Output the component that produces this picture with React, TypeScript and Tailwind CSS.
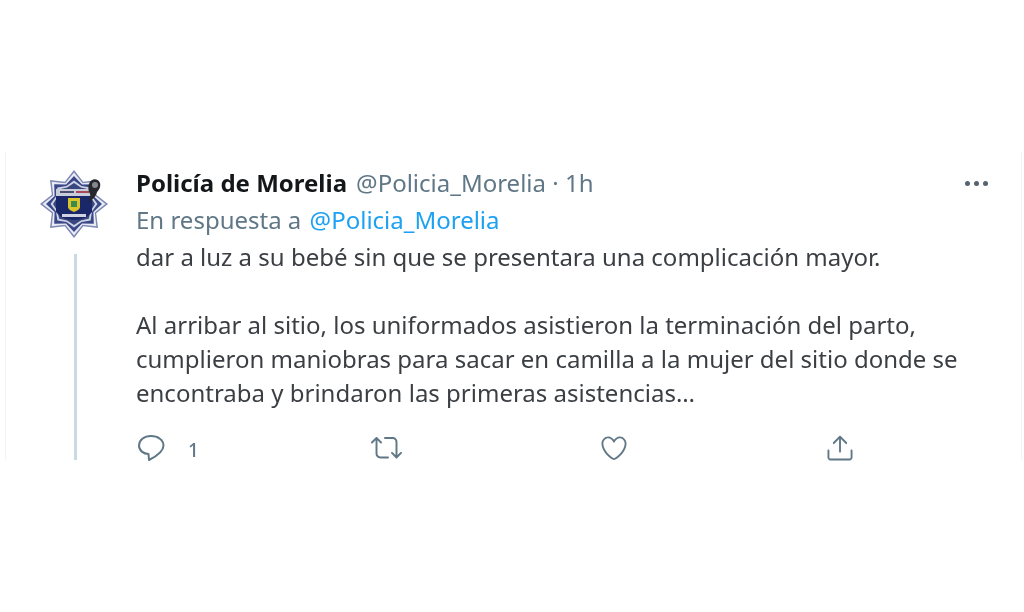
const font = "font-['Noto_Sans',sans-serif]";

function star(r1: number, r2: number) {
  const pts: string[] = [];
  for (let i = 0; i < 16; i++) {
    const a = (i * Math.PI) / 8 - Math.PI / 2;
    const r = i % 2 === 0 ? r1 : r2;
    pts.push(`${(34 + r * Math.cos(a)).toFixed(1)},${(34 + r * Math.sin(a)).toFixed(1)}`);
  }
  return pts.join(" ");
}

function Badge() {
  return (
    <svg width="70" height="68" viewBox="0 0 70 68" className="blur-[0.6px]">
      <polygon points={star(34, 24)} fill="#7f89b4" />
      <polygon points={star(31.500, 22.500)} fill="#e9ebf4" />
      <polygon points={star(28, 21)} fill="#3a4888" />
      <polygon points={star(23.500, 19.500)} fill="#cfd3e4" />
      <polygon points={star(21, 18)} fill="#39477f" />
      <path d="M16 21h36v21c-4 5-10 8-18 8s-14-3-18-8z" fill="#1a2768" />
      <rect x="16" y="19" width="36" height="7" fill="#c9ccda" />
      <rect x="20" y="21" width="14" height="2" fill="#4a4f6e" />
      <rect x="36" y="21" width="13" height="2" fill="#a8485a" />
      <path d="M28 28h12v9c0 2-3 4-6 5-3-1-6-3-6-5z" fill="#d9c528" />
      <rect x="31" y="31" width="6" height="6" fill="#3c8a4c" />
      <rect x="22" y="44" width="24" height="3" fill="#cfd2e2" />
      <path d="M49 14c2-6 9-6 11-1 1 4-1 7-3 9-1 4-4 8-9 10 1-3 3-6 2-8-2-3-2-7-1-10z" fill="#26272d" />
      <circle cx="55" cy="15" r="3" fill="#85878e" />
    </svg>
  );
}

const iconColor = "#5f7786";

function Reply() {
  return (
    <svg width="30" height="30" viewBox="0 0 30 30" fill="none" stroke={iconColor} strokeWidth="2" strokeLinejoin="round">
      <path d="M15 3C8 3 3 7 3 12.500C3 17.500 7.500 21 12.500 21L13 27C20 23.500 27.500 18.500 27.500 12.500C27.500 7 22 3 15 3z" />
    </svg>
  );
}

function Retweet() {
  return (
    <svg width="31" height="31" viewBox="0 0 24 24" fill={iconColor}>
      <path d="M23.77 15.67c-.292-.293-.767-.293-1.06 0l-2.22 2.22V7.65c0-2.068-1.683-3.75-3.75-3.75h-5.85c-.414 0-.75.336-.75.75s.336.75.75.75h5.85c1.24 0 2.25 1.01 2.25 2.25v10.24l-2.22-2.22c-.293-.293-.768-.293-1.06 0s-.294.768 0 1.06l3.5 3.5c.145.147.337.22.53.22s.383-.072.53-.22l3.5-3.5c.294-.292.294-.767 0-1.06zm-10.66 3.28H7.26c-1.24 0-2.25-1.01-2.25-2.25V6.46l2.22 2.22c.148.147.34.22.532.22s.384-.073.53-.22c.293-.293.293-.768 0-1.06l-3.5-3.5c-.293-.294-.768-.294-1.06 0l-3.5 3.5c-.294.292-.294.767 0 1.06s.767.293 1.06 0l2.22-2.22V16.7c0 2.068 1.683 3.750 3.75 3.750h5.85c.414 0 .75-.336.75-.75s-.337-.75-.75-.75z" />
    </svg>
  );
}

function Heart() {
  return (
    <svg width="30" height="30" viewBox="0 0 24 24" fill={iconColor}>
      <path d="M12 21.638h-.014C9.403 21.59 1.95 14.856 1.95 8.478c0-3.064 2.525-5.754 5.403-5.754 2.29 0 3.83 1.58 4.646 2.73.814-1.148 2.354-2.73 4.645-2.73 2.88 0 5.404 2.69 5.404 5.755 0 6.376-7.454 13.11-10.037 13.157H12zM7.354 4.225c-2.08 0-3.903 1.988-3.903 4.255 0 5.74 7.034 11.596 8.55 11.658 1.518-.062 8.55-5.917 8.55-11.658 0-2.267-1.823-4.255-3.903-4.255-2.528 0-3.94 2.936-3.952 2.965-.23.562-1.156.562-1.387 0-.014-.03-1.425-2.965-3.954-2.965z" />
    </svg>
  );
}

function Share() {
  return (
    <svg width="30" height="30" viewBox="0 0 24 24" fill={iconColor}>
      <path d="M17.53 7.47l-5-5c-.293-.293-.768-.293-1.06 0l-5 5c-.294.293-.294.768 0 1.06s.767.294 1.06 0l3.72-3.72V15c0 .414.336.75.75.75s.75-.336.75-.75V4.81l3.72 3.72c.146.147.338.22.53.22s.384-.072.53-.22c.293-.293.293-.767 0-1.06z" />
      <path d="M19.708 21.944H4.292C3.028 21.944 2 20.916 2 19.652V14c0-.414.336-.75.75-.75s.75.336.75.75v5.652c0 .437.355.792.792.792h15.416c.437 0 .792-.355.792-.792V14c0-.414.336-.75.75-.75s.75.336.75.75v5.652c0 1.264-1.028 2.292-2.292 2.292z" />
    </svg>
  );
}

export default function App() {
  return (
    <div className={`h-[612px] w-[1024px] overflow-hidden bg-white pt-[152px] ${font}`}>
      <div className="ml-[5px] flex h-[308px] w-[1017px] border-x border-[#f2f3f4]">
        <div className="flex w-[130px] shrink-0 flex-col items-center pl-[8px] pt-[18px]">
          <Badge />
          <div className="mt-[16px] w-[3px] flex-1 bg-[#c9dbe2]" />
        </div>
        <div className="flex min-w-0 flex-1 flex-col pr-[33px] blur-[0.3px]">
          <div className="mt-[14px] flex h-[34px] items-center justify-between">
            <div className="flex items-baseline whitespace-nowrap text-[24px]">
              <span className="font-bold text-[#14171a]">Policía de Morelia</span>
              <span className="ml-[9px] text-[#5f7786]">@Policia_Morelia · 1h</span>
            </div>
            <div className="flex gap-[4px]">
              <span className="size-[5px] rounded-full bg-[#566370]" />
              <span className="size-[5px] rounded-full bg-[#566370]" />
              <span className="size-[5px] rounded-full bg-[#566370]" />
            </div>
          </div>
          <div className="mt-[3px] h-[34px] whitespace-nowrap text-[24px] leading-[34px] text-[#5f7786]">
            En respuesta a <span className="ml-[2px] text-[#1da1f2]">@Policia_Morelia</span>
          </div>
          <div className="mt-[3px] text-[24px] leading-[34px] whitespace-nowrap text-[#3b3f43]">
            <p>dar a luz a su bebé sin que se presentara una complicación mayor.</p>
            <p className="h-[34px]"></p>
            <p>Al arribar al sitio, los uniformados asistieron la terminación del parto,</p>
            <p>cumplieron maniobras para sacar en camilla a la mujer del sitio donde se</p>
            <p>encontraba y brindaron las primeras asistencias…</p>
          </div>
          <div className="mt-[21px] flex items-center">
            <div className="flex w-[235px] items-center">
              <Reply />
              <span className="ml-[22px] pt-[5px] text-[19px] font-medium text-[#5f7786]">1</span>
            </div>
            <div className="w-[228px]"><Retweet /></div>
            <div className="w-[226px]"><Heart /></div>
            <Share />
          </div>
        </div>
      </div>
    </div>
  );
}
